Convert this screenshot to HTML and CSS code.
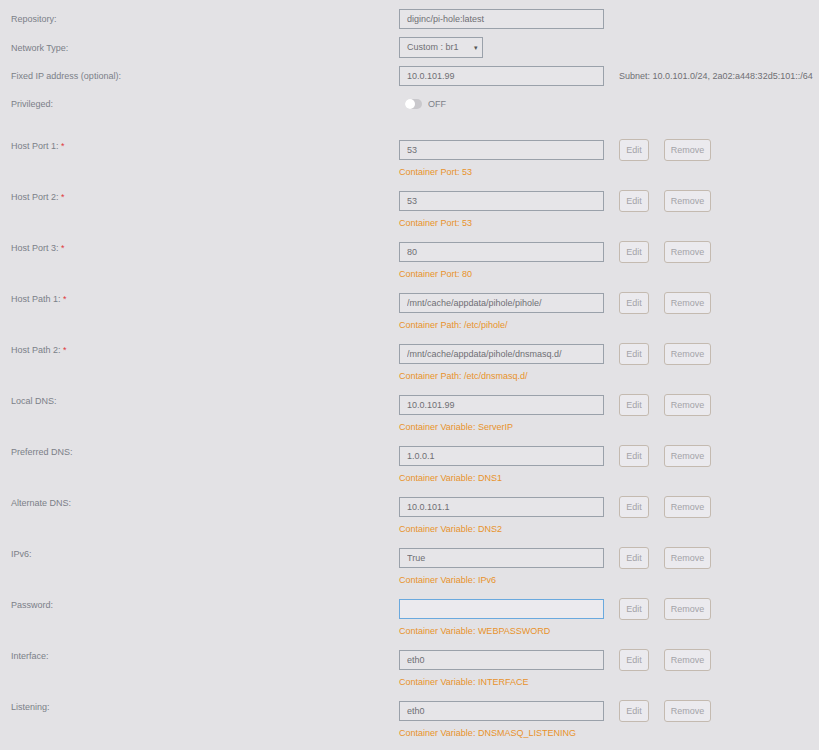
FILE: index.html
```html
<!DOCTYPE html>
<html lang="en">
  <head>
    <meta charset="UTF-8" />
    <title>Update Container</title>
    <link rel="stylesheet" href="styles.css">
  </head>
  <body>
    <form class="settings">
      <div class="row">
        <label class="label">Repository:</label>
        <input class="field" type="text" value="diginc/pi-hole:latest" />
      </div>
      <div class="row">
        <label class="label">Network Type:</label>
        <div class="select">Custom : br1<span class="caret">&#9662;</span></div>
      </div>
      <div class="row">
        <label class="label">Fixed IP address (optional):</label>
        <input class="field" type="text" value="10.0.101.99" />
        <span class="hint">Subnet: 10.0.101.0/24, 2a02:a448:32d5:101::/64</span>
      </div>
      <div class="row">
        <label class="label">Privileged:</label>
        <div class="switch"><span class="knob"></span></div>
        <span class="switch-text">OFF</span>
      </div>

      <div class="config">
        <div class="config-row">
          <label class="label">Host Port 1: <span class="req">*</span></label>
          <div class="value">
            <input class="field" type="text" value="53" />
            <div class="note">Container Port: 53</div>
          </div>
          <button type="button" class="btn btn-edit">Edit</button>
          <button type="button" class="btn btn-remove">Remove</button>
        </div>
        <div class="config-row">
          <label class="label">Host Port 2: <span class="req">*</span></label>
          <div class="value">
            <input class="field" type="text" value="53" />
            <div class="note">Container Port: 53</div>
          </div>
          <button type="button" class="btn btn-edit">Edit</button>
          <button type="button" class="btn btn-remove">Remove</button>
        </div>
        <div class="config-row">
          <label class="label">Host Port 3: <span class="req">*</span></label>
          <div class="value">
            <input class="field" type="text" value="80" />
            <div class="note">Container Port: 80</div>
          </div>
          <button type="button" class="btn btn-edit">Edit</button>
          <button type="button" class="btn btn-remove">Remove</button>
        </div>
        <div class="config-row">
          <label class="label">Host Path 1: <span class="req">*</span></label>
          <div class="value">
            <input class="field" type="text" value="/mnt/cache/appdata/pihole/pihole/" />
            <div class="note">Container Path: /etc/pihole/</div>
          </div>
          <button type="button" class="btn btn-edit">Edit</button>
          <button type="button" class="btn btn-remove">Remove</button>
        </div>
        <div class="config-row">
          <label class="label">Host Path 2: <span class="req">*</span></label>
          <div class="value">
            <input class="field" type="text" value="/mnt/cache/appdata/pihole/dnsmasq.d/" />
            <div class="note">Container Path: /etc/dnsmasq.d/</div>
          </div>
          <button type="button" class="btn btn-edit">Edit</button>
          <button type="button" class="btn btn-remove">Remove</button>
        </div>
        <div class="config-row">
          <label class="label">Local DNS:</label>
          <div class="value">
            <input class="field" type="text" value="10.0.101.99" />
            <div class="note">Container Variable: ServerIP</div>
          </div>
          <button type="button" class="btn btn-edit">Edit</button>
          <button type="button" class="btn btn-remove">Remove</button>
        </div>
        <div class="config-row">
          <label class="label">Preferred DNS:</label>
          <div class="value">
            <input class="field" type="text" value="1.0.0.1" />
            <div class="note">Container Variable: DNS1</div>
          </div>
          <button type="button" class="btn btn-edit">Edit</button>
          <button type="button" class="btn btn-remove">Remove</button>
        </div>
        <div class="config-row">
          <label class="label">Alternate DNS:</label>
          <div class="value">
            <input class="field" type="text" value="10.0.101.1" />
            <div class="note">Container Variable: DNS2</div>
          </div>
          <button type="button" class="btn btn-edit">Edit</button>
          <button type="button" class="btn btn-remove">Remove</button>
        </div>
        <div class="config-row">
          <label class="label">IPv6:</label>
          <div class="value">
            <input class="field" type="text" value="True" />
            <div class="note">Container Variable: IPv6</div>
          </div>
          <button type="button" class="btn btn-edit">Edit</button>
          <button type="button" class="btn btn-remove">Remove</button>
        </div>
        <div class="config-row">
          <label class="label">Password:</label>
          <div class="value">
            <input class="field field-focus" type="text" value="" />
            <div class="note">Container Variable: WEBPASSWORD</div>
          </div>
          <button type="button" class="btn btn-edit">Edit</button>
          <button type="button" class="btn btn-remove">Remove</button>
        </div>
        <div class="config-row">
          <label class="label">Interface:</label>
          <div class="value">
            <input class="field" type="text" value="eth0" />
            <div class="note">Container Variable: INTERFACE</div>
          </div>
          <button type="button" class="btn btn-edit">Edit</button>
          <button type="button" class="btn btn-remove">Remove</button>
        </div>
        <div class="config-row">
          <label class="label">Listening:</label>
          <div class="value">
            <input class="field" type="text" value="eth0" />
            <div class="note">Container Variable: DNSMASQ_LISTENING</div>
          </div>
          <button type="button" class="btn btn-edit">Edit</button>
          <button type="button" class="btn btn-remove">Remove</button>
        </div>
      </div>
    </form>
  </body>
</html>
```
FILE: styles.css
```css
html,
body {
  background-color: #e3e2e5;
}
body {
  font-family: "Liberation Sans", Arial, sans-serif;
  font-size: 9px;
  color: #7b8088;
  margin: 0;
  padding: 9px 0 0 11px;
}
.settings {
  margin: 0;
}
.row {
  display: flex;
  align-items: center;
  margin-bottom: 8px;
  min-height: 20px;
}
.label {
  width: 388px;
  flex-shrink: 0;
  line-height: 12px;
}
.req {
  color: #e0393e;
}
.field {
  width: 205px;
  height: 20px;
  box-sizing: border-box;
  margin: 0;
  padding: 0 7px;
  font-family: inherit;
  font-size: 9px;
  color: #6f6f74;
  background-color: #e6e5e8;
  border: 1px solid #9aa1aa;
  border-radius: 0;
  outline: none;
}
.field-focus {
  background-color: #ebeaee;
  border-color: #6aa9de;
}
.select {
  position: relative;
  width: 84px;
  height: 21px;
  box-sizing: border-box;
  padding: 0 7px;
  line-height: 19px;
  color: #6f6f74;
  background-color: #e6e5e8;
  border: 1px solid #9aa1aa;
}
.caret {
  position: absolute;
  right: 4px;
  top: 0;
  font-size: 7px;
  color: #555;
}
.hint {
  margin-left: 15px;
  color: #6f6f74;
}
.switch {
  width: 17px;
  height: 10px;
  margin-left: 6px;
  border-radius: 5px;
  background-color: #c9c8cc;
  position: relative;
}
.knob {
  position: absolute;
  left: 0;
  top: 0;
  width: 10px;
  height: 10px;
  border-radius: 50%;
  background-color: #ffffff;
}
.switch-text {
  margin-left: 6px;
  color: #7b8088;
}
.config {
  padding-top: 18px;
}
.config-row {
  display: flex;
  align-items: flex-start;
  height: 51px;
}
.value {
  width: 205px;
  flex-shrink: 0;
}
.note {
  margin-top: 6px;
  line-height: 12px;
  color: #e8922b;
}
.btn {
  margin: -1px 0 0 15px;
  height: 22px;
  padding: 0;
  font-family: inherit;
  font-size: 9px;
  color: #a3a3a8;
  background-color: #ebeaee;
  border: 1px solid #c4bab0;
  border-radius: 3px;
}
.btn-edit {
  width: 30px;
}
.btn-remove {
  width: 47px;
}
```
